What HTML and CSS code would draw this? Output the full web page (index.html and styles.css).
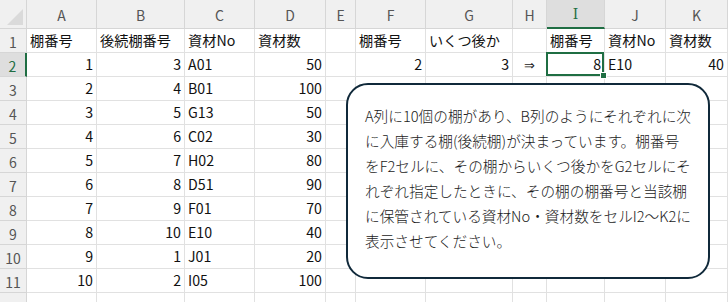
FILE: index.html
```html
<!DOCTYPE html>
<html lang="ja">
<head>
<meta charset="utf-8">
<link rel="stylesheet" href="styles.css">
</head>
<body>
<div class="sheet">
  <div class="grid">
    <div class="hd corner"><span class="tri"></span></div>
    <div class="hd col">A</div>
    <div class="hd col">B</div>
    <div class="hd col">C</div>
    <div class="hd col">D</div>
    <div class="hd col">E</div>
    <div class="hd col">F</div>
    <div class="hd col">G</div>
    <div class="hd col">H</div>
    <div class="hd col sel"><span class="serif">I</span></div>
    <div class="hd col">J</div>
    <div class="hd col">K</div>

    <div class="hd row">1</div>
    <div class="c">棚番号</div>
    <div class="c">後続棚番号</div>
    <div class="c">資材No</div>
    <div class="c">資材数</div>
    <div class="c"></div>
    <div class="c">棚番号</div>
    <div class="c">いくつ後か</div>
    <div class="c"></div>
    <div class="c">棚番号</div>
    <div class="c">資材No</div>
    <div class="c">資材数</div>

    <div class="hd row rsel">2</div>
    <div class="c r">1</div>
    <div class="c r">3</div>
    <div class="c">A01</div>
    <div class="c r">50</div>
    <div class="c"></div>
    <div class="c r">2</div>
    <div class="c r">3</div>
    <div class="c m"><span class="arrow">⇒</span></div>
    <div class="c r active">8<span class="handle"></span></div>
    <div class="c">E10</div>
    <div class="c r">40</div>

    <div class="hd row">3</div>
    <div class="c r">2</div><div class="c r">4</div><div class="c">B01</div><div class="c r">100</div>
    <div class="c"></div><div class="c"></div><div class="c"></div><div class="c"></div><div class="c"></div><div class="c"></div><div class="c"></div>

    <div class="hd row">4</div>
    <div class="c r">3</div><div class="c r">5</div><div class="c">G13</div><div class="c r">50</div>
    <div class="c"></div><div class="c"></div><div class="c"></div><div class="c"></div><div class="c"></div><div class="c"></div><div class="c"></div>

    <div class="hd row">5</div>
    <div class="c r">4</div><div class="c r">6</div><div class="c">C02</div><div class="c r">30</div>
    <div class="c"></div><div class="c"></div><div class="c"></div><div class="c"></div><div class="c"></div><div class="c"></div><div class="c"></div>

    <div class="hd row">6</div>
    <div class="c r">5</div><div class="c r">7</div><div class="c">H02</div><div class="c r">80</div>
    <div class="c"></div><div class="c"></div><div class="c"></div><div class="c"></div><div class="c"></div><div class="c"></div><div class="c"></div>

    <div class="hd row">7</div>
    <div class="c r">6</div><div class="c r">8</div><div class="c">D51</div><div class="c r">90</div>
    <div class="c"></div><div class="c"></div><div class="c"></div><div class="c"></div><div class="c"></div><div class="c"></div><div class="c"></div>

    <div class="hd row">8</div>
    <div class="c r">7</div><div class="c r">9</div><div class="c">F01</div><div class="c r">70</div>
    <div class="c"></div><div class="c"></div><div class="c"></div><div class="c"></div><div class="c"></div><div class="c"></div><div class="c"></div>

    <div class="hd row">9</div>
    <div class="c r">8</div><div class="c r">10</div><div class="c">E10</div><div class="c r">40</div>
    <div class="c"></div><div class="c"></div><div class="c"></div><div class="c"></div><div class="c"></div><div class="c"></div><div class="c"></div>

    <div class="hd row">10</div>
    <div class="c r">9</div><div class="c r">1</div><div class="c">J01</div><div class="c r">20</div>
    <div class="c"></div><div class="c"></div><div class="c"></div><div class="c"></div><div class="c"></div><div class="c"></div><div class="c"></div>

    <div class="hd row">11</div>
    <div class="c r">10</div><div class="c r">2</div><div class="c">I05</div><div class="c r">100</div>
    <div class="c"></div><div class="c"></div><div class="c"></div><div class="c"></div><div class="c"></div><div class="c"></div><div class="c"></div>

    <div class="hd row"></div>
    <div class="c"></div><div class="c"></div><div class="c"></div><div class="c"></div>
    <div class="c"></div><div class="c"></div><div class="c"></div><div class="c"></div><div class="c"></div><div class="c"></div><div class="c"></div>
  </div>

  <div class="note">
    <p>A列に10個の棚があり、B列のようにそれぞれに次</p>
    <p>に入庫する棚(後続棚)が決まっています。棚番号</p>
    <p>をF2セルに、その棚からいくつ後かをG2セルにそ</p>
    <p>れぞれ指定したときに、その棚の棚番号と当該棚</p>
    <p>に保管されている資材No・資材数をセルI2〜K2に</p>
    <p>表示させてください。</p>
  </div>
</div>
</body>
</html>
```

FILE: styles.css
```css
html, body {
  margin: 0;
  padding: 0;
  background: #ffffff;
  overflow: hidden;
}

.sheet {
  position: relative;
  width: 728px;
  height: 302px;
  overflow: hidden;
  font-family: "Noto Sans CJK JP", "Noto Sans", sans-serif;
}

.grid {
  display: grid;
  grid-template-columns: 27px 70px 88px 70px 71px 30px 70px 87px 34px 58px 61px 62px;
  grid-template-rows: 29px repeat(12, 24px);
}

.hd {
  box-sizing: border-box;
  background: #f0f0f0;
  color: #555555;
  font-size: 14px;
  line-height: 1;
  display: flex;
  align-items: center;
  justify-content: center;
  border-right: 1px solid #d6d6d6;
  border-bottom: 1px solid #d6d6d6;
}

.col {
  padding-top: 1px;
}

.corner {
  position: relative;
}

.tri {
  position: absolute;
  right: 3px;
  bottom: 3px;
  width: 0;
  height: 0;
  border-left: 16px solid transparent;
  border-bottom: 16px solid #dadada;
}

.sel {
  background: #dedede;
  color: #1f6e43;
  border-bottom: 2px solid #1f6e43;
}

.serif {
  font-family: "DejaVu Serif", serif;
  font-size: 14px;
}

.row {
  padding-top: 2px;
}

.rsel {
  background: #dedede;
  color: #1f6e43;
  border-right: 2px solid #1f6e43;
}

.c {
  box-sizing: border-box;
  position: relative;
  border-right: 1px solid #e1e1e1;
  border-bottom: 1px solid #e1e1e1;
  font-size: 14.2px;
  line-height: 23px;
  color: #111111;
  padding: 0 3px;
  white-space: nowrap;
  overflow: visible;
}

.r {
  text-align: right;
}

.m {
  text-align: center;
  padding: 0;
}

.arrow {
  font-family: "DejaVu Sans", sans-serif;
  font-size: 13px;
  color: #222222;
}

.active::after {
  content: "";
  position: absolute;
  left: -1px;
  top: -1px;
  right: 0;
  bottom: 0;
  border: 2px solid #1f6e43;
  pointer-events: none;
}

.handle {
  position: absolute;
  right: -3px;
  bottom: -3px;
  width: 5px;
  height: 5px;
  background: #1f6e43;
  border: 1px solid #ffffff;
  z-index: 2;
}

.note {
  position: absolute;
  left: 346px;
  top: 83px;
  width: 364px;
  height: 196px;
  box-sizing: border-box;
  border: 2.5px solid #10293a;
  border-radius: 22px;
  background: #ffffff;
  padding: 18px 0 0 17px;
  color: #1a1a1a;
  font-size: 14.67px;
  font-weight: 300;
  line-height: 25px;
}

.note p {
  margin: 0;
  white-space: nowrap;
}
```
